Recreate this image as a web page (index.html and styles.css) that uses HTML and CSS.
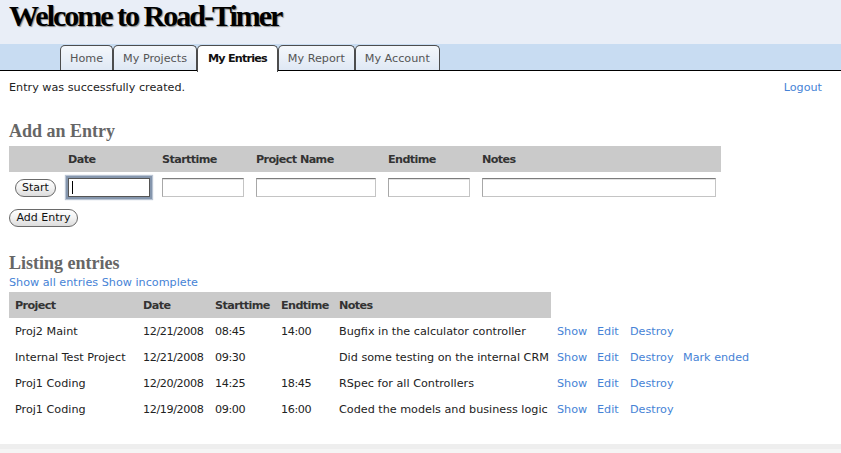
FILE: index.html
```html
<!DOCTYPE html>
<html lang="en">
<head>
<meta charset="utf-8">
<title>Road-Timer</title>
<link rel="stylesheet" href="styles.css">
</head>
<body>
<div class="header">
  <h1 class="site-title">Welcome to Road-Timer</h1>
</div>
<div class="tabbar">
  <ul class="tabs">
    <li class="tab"><a href="#">Home</a></li>
    <li class="tab"><a href="#">My Projects</a></li>
    <li class="tab active"><a href="#">My Entries</a></li>
    <li class="tab"><a href="#">My Report</a></li>
    <li class="tab"><a href="#">My Account</a></li>
  </ul>
</div>
<div class="content">
  <div class="flash-row">
    <p class="notice">Entry was successfully created.</p>
    <a class="link" href="#">Logout</a>
  </div>

  <h2 class="section-title">Add an Entry</h2>
  <form class="entry-form">
    <table class="form-table">
      <colgroup>
        <col class="fc-btn"><col class="fc-short"><col class="fc-short"><col class="fc-mid"><col class="fc-short"><col class="fc-long">
      </colgroup>
      <thead>
        <tr>
          <th></th>
          <th>Date</th>
          <th>Starttime</th>
          <th>Project Name</th>
          <th>Endtime</th>
          <th>Notes</th>
        </tr>
      </thead>
      <tbody>
        <tr>
          <td><button type="button" class="btn btn-start">Start</button></td>
          <td><input class="field field-short focused" type="text"></td>
          <td><input class="field field-short" type="text"></td>
          <td><input class="field field-mid" type="text"></td>
          <td><input class="field field-short" type="text"></td>
          <td><input class="field field-long" type="text"></td>
        </tr>
      </tbody>
    </table>
    <button type="button" class="btn btn-submit">Add Entry</button>
  </form>

  <h2 class="section-title section-listing">Listing entries</h2>
  <div class="filters"><a class="link" href="#">Show all entries</a> <a class="link" href="#">Show incomplete</a></div>
  <table class="entries">
    <colgroup>
      <col class="ec-project"><col class="ec-date"><col class="ec-start"><col class="ec-end"><col class="ec-notes"><col class="ec-show"><col class="ec-edit"><col class="ec-destroy"><col class="ec-mark">
    </colgroup>
    <thead>
      <tr>
        <th>Project</th>
        <th>Date</th>
        <th>Starttime</th>
        <th>Endtime</th>
        <th>Notes</th>
        <th class="blank"></th><th class="blank"></th><th class="blank"></th><th class="blank"></th>
      </tr>
    </thead>
    <tbody>
      <tr>
        <td>Proj2 Maint</td><td class="num">12/21/2008</td><td class="num">08:45</td><td class="num">14:00</td><td>Bugfix in the calculator controller</td>
        <td><a class="link" href="#">Show</a></td><td><a class="link" href="#">Edit</a></td><td><a class="link" href="#">Destroy</a></td><td></td>
      </tr>
      <tr>
        <td>Internal Test Project</td><td class="num">12/21/2008</td><td class="num">09:30</td><td class="num"></td><td>Did some testing on the internal CRM</td>
        <td><a class="link" href="#">Show</a></td><td><a class="link" href="#">Edit</a></td><td><a class="link" href="#">Destroy</a></td><td><a class="link" href="#">Mark ended</a></td>
      </tr>
      <tr>
        <td>Proj1 Coding</td><td class="num">12/20/2008</td><td class="num">14:25</td><td class="num">18:45</td><td>RSpec for all Controllers</td>
        <td><a class="link" href="#">Show</a></td><td><a class="link" href="#">Edit</a></td><td><a class="link" href="#">Destroy</a></td><td></td>
      </tr>
      <tr>
        <td>Proj1 Coding</td><td class="num">12/19/2008</td><td class="num">09:00</td><td class="num">16:00</td><td>Coded the models and business logic</td>
        <td><a class="link" href="#">Show</a></td><td><a class="link" href="#">Edit</a></td><td><a class="link" href="#">Destroy</a></td><td></td>
      </tr>
    </tbody>
  </table>
</div>
<div class="footer"></div>
</body>
</html>
```
FILE: styles.css
```css
html, body {
  margin: 0;
  padding: 0;
  background: #fff;
}
body {
  font-family: "DejaVu Sans", Verdana, sans-serif;
  font-size: 11.2px;
  color: #222;
}
.header {
  height: 44px;
  background: #e9eef7;
  padding-left: 9px;
}
.site-title {
  margin: 0;
  font-family: "Liberation Serif", "Times New Roman", serif;
  font-size: 30px;
  line-height: 32px;
  letter-spacing: -2px;
  font-weight: bold;
  color: #000;
  text-shadow: 1px 1px 1px #8a8a8a;
}
.tabbar {
  height: 26px;
  background: #c8dcf2;
  border-bottom: 1px solid #000;
}
.tabs {
  list-style: none;
  margin: 0;
  padding: 1px 0 0 60px;
  display: flex;
  align-items: flex-start;
}
.tab a {
  display: block;
  height: 24px;
  line-height: 25px;
  padding: 0 9px;
  border: 1px solid #4d4d4d;
  border-bottom: none;
  border-radius: 5px 5px 0 0;
  background: linear-gradient(#f4f7fb, #dfe8f4);
  color: #555;
  text-decoration: none;
}
.tab.active a {
  height: 26px;
  background: #fff;
  color: #111;
  font-weight: bold;
  letter-spacing: -0.8px;
  padding: 0 10px 0 10px;
}
.content {
  padding: 9px 19px 0 9px;
}
.flash-row {
  display: flex;
  justify-content: space-between;
  line-height: 16px;
}
.notice {
  margin: 0;
}
.link {
  color: #4683d6;
  text-decoration: none;
}
.section-title {
  margin: 24px 0 0;
  font-family: "Liberation Serif", "Times New Roman", serif;
  font-size: 18px;
  line-height: 22px;
  font-weight: bold;
  color: #666;
}
.section-listing {
  margin-top: 25px;
}
.entry-form {
  margin: 4px 0 0;
}
.form-table, .entries {
  border-collapse: collapse;
  border-spacing: 0;
  table-layout: fixed;
}
.form-table { width: 712px; }
.entries { width: 744px; }
.fc-btn { width: 53px; }
.fc-short { width: 94px; }
.fc-mid { width: 132px; }
.fc-long { width: 245px; }
.ec-project { width: 128px; }
.ec-date { width: 72px; }
.ec-start { width: 66px; }
.ec-end { width: 58px; }
.ec-notes { width: 218px; }
.ec-show { width: 40px; }
.ec-edit { width: 33px; }
.ec-destroy { width: 53px; }
.ec-mark { width: 76px; }
.form-table th, .entries th {
  background: #cacaca;
  text-align: left;
  font-weight: bold;
  letter-spacing: -0.6px;
  color: #333;
  height: 26px;
  padding: 0 6px;
  white-space: nowrap;
}
.entries th.blank {
  background: transparent;
}
.form-table td {
  padding: 6px 6px;
  vertical-align: middle;
}
.field {
  display: block;
  box-sizing: border-box;
  height: 19px;
  margin: 0;
  padding: 0;
  border: 1px solid #c4c4c4;
  border-top-color: #7c7c7c;
  border-left-color: #a8a8a8;
  box-shadow: inset 0 1px 0 #e2e2e2;
  background: #fff;
}
.field-short { width: 82px; }
.field-mid { width: 120px; }
.field-long { width: 234px; }
.field.focused {
  border-color: #555;
  box-shadow: 0 0 0 2px #8596ad, 0 0 1px 3px #b9c4d3;
  background: #fff linear-gradient(#000, #000) no-repeat 3px 2px / 1px 13px;
}
.btn {
  display: block;
  box-sizing: border-box;
  height: 18px;
  margin: 0;
  padding: 0;
  border: 1px solid #6a6a6a;
  border-radius: 9px;
  background: linear-gradient(#ffffff, #f2f2f2 50%, #dcdcdc);
  font-family: "DejaVu Sans", Verdana, sans-serif;
  font-size: 11px;
  color: #111;
  line-height: 16px;
  text-align: center;
}
.btn-start { width: 41px; }
.btn-submit {
  width: 69px;
  margin-top: 6px;
}
.filters {
  line-height: 18px;
}
.entries td {
  height: 26px;
  padding: 0 6px;
  vertical-align: middle;
  white-space: nowrap;
}
.entries td.num {
  letter-spacing: -0.4px;
}
.footer {
  margin-top: 22px;
  border-top: 5px solid #eeeeee;
  background: #f5f5f5;
  height: 20px;
}
```
